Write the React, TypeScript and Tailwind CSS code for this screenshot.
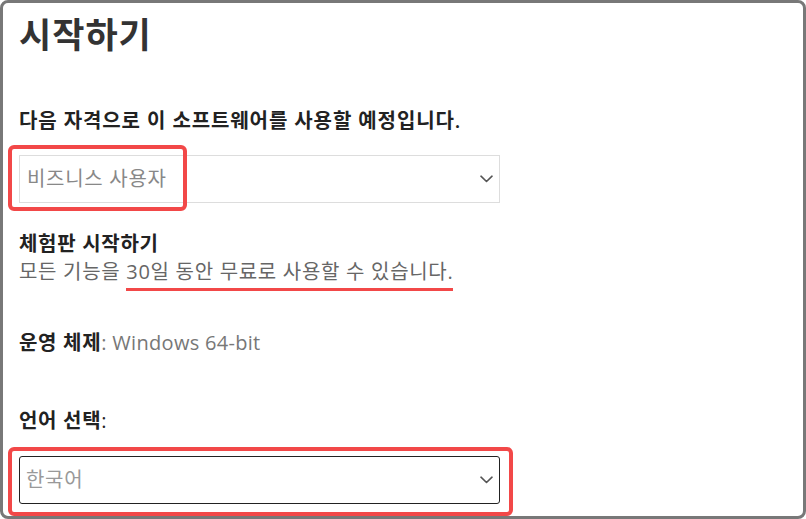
function Chevron() {
  return (
    <svg width="13" height="8" viewBox="0 0 13 8" fill="none" className="shrink-0">
      <path d="M1 1.2l5.5 5.3 5.5-5.3" stroke="#555" strokeWidth="1.6" strokeLinecap="round" strokeLinejoin="round" />
    </svg>
  );
}

export default function App() {
  return (
    <div className="w-[806px] h-[519px] bg-white font-['Open_Sans','Noto_Sans_CJK_KR',sans-serif]">
      <div className="h-full border-[3px] border-[#787878] rounded-[8px] pl-[16px] pt-[12px] flex flex-col">
        <h1 className="text-[35px] leading-[40px] tracking-[1px] font-bold text-[#333]">시작하기</h1>

        <p className="mt-[52px] text-[20px] leading-[28px] tracking-[0.9px] font-semibold text-[#222]">
          다음 자격으로 이 소프트웨어를 사용할 예정입니다.
        </p>

        <div className="relative mt-[20px] w-[481px]">
          <div className="h-[48px] border border-[#ddd] flex items-center justify-between pl-[7px] pr-[6px]">
            <span className="text-[20px] tracking-[0.7px] text-[#888]">비즈니스 사용자</span>
            <Chevron />
          </div>
          <div className="absolute left-[-11px] top-[-10px] w-[179px] h-[66px] border-[4px] border-[#f24848] rounded-[6px]" />
        </div>

        <div className="mt-[27px] text-[20px] leading-[28px] tracking-[0.7px]">
          <p className="font-bold text-[#222]">체험판 시작하기</p>
          <p className="text-[#666]">
            모든 기능을{" "}
            <span className="relative">
              30일 동안 무료로 사용할 수 있습니다.
              <span className="absolute left-0 right-0 bottom-[-6px] h-[3px] bg-[#f24848]" />
            </span>
          </p>
        </div>

        <p className="mt-[43px] text-[20px] leading-[28px] tracking-[0.3px] text-[#777]">
          <span className="font-bold tracking-[0.7px] text-[#222]">운영 체제</span>: Windows 64-bit
        </p>

        <p className="mt-[50px] text-[20px] leading-[28px] tracking-[0.7px] text-[#222]">
          <span className="font-bold">언어 선택</span>:
        </p>

        <div className="relative mt-[21px] w-[481px]">
          <div className="h-[48px] border border-[#222] rounded-[3px] flex items-center justify-between pl-[6px] pr-[6px]">
            <span className="text-[20px] tracking-[0.7px] text-[#999]">한국어</span>
            <Chevron />
          </div>
          <div className="absolute left-[-11px] top-[-9px] right-[-13px] bottom-[-12px] border-[4px] border-[#f24848] rounded-[6px]" />
        </div>
      </div>
    </div>
  );
}
